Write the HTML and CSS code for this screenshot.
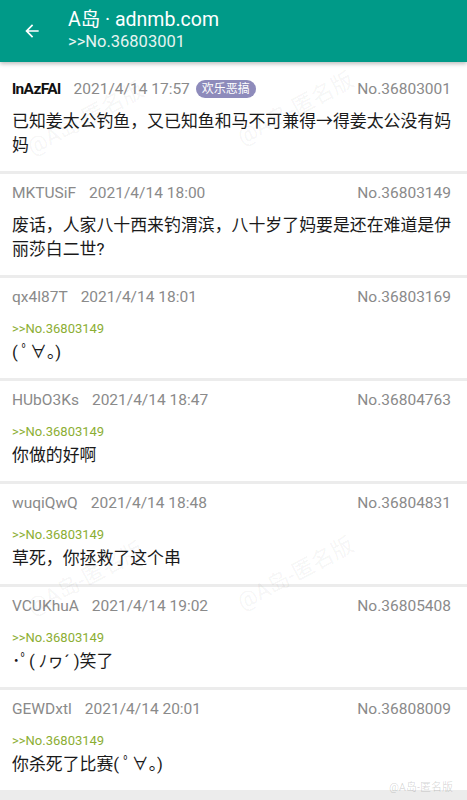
FILE: index.html
```
<!DOCTYPE html>
<html lang="zh-CN">
<head>
    <meta charset="UTF-8">
    <meta name="viewport" content="width=device-width, initial-scale=1.0">
    <title>A岛 · adnmb.com</title>
    <link rel="stylesheet" href="styles.css">
</head>
<body>
    <header class="appbar">
        <svg class="back" width="20" height="20" viewBox="0 0 24 24">
            <path d="M20 11H7.83l5.59-5.59L12 4l-8 8 8 8 1.41-1.41L7.83 13H20v-2z" fill="#fff"/>
        </svg>
        <div class="titles">
            <div class="title">A岛 · adnmb.com</div>
            <div class="subtitle">&gt;&gt;No.36803001</div>
        </div>
    </header>

    <div class="thread">
        <div class="post">
            <div class="meta">
                <span class="uid po">lnAzFAl</span>
                <span class="time">2021/4/14 17:57</span>
                <span class="tag">欢乐恶搞</span>
                <span class="no">No.36803001</span>
            </div>
            <div class="content">已知姜太公钓鱼，又已知鱼和马不可兼得→得姜太公没有妈妈</div>
        </div>

        <div class="post">
            <div class="meta">
                <span class="uid">MKTUSiF</span>
                <span class="time">2021/4/14 18:00</span>
                <span class="no">No.36803149</span>
            </div>
            <div class="content">废话，人家八十西来钓渭滨，八十岁了妈要是还在难道是伊丽莎白二世?</div>
        </div>

        <div class="post">
            <div class="meta">
                <span class="uid">qx4l87T</span>
                <span class="time">2021/4/14 18:01</span>
                <span class="no">No.36803169</span>
            </div>
            <div class="ref">&gt;&gt;No.36803149</div>
            <div class="content tight">( ﾟ∀。)</div>
        </div>

        <div class="post">
            <div class="meta">
                <span class="uid">HUbO3Ks</span>
                <span class="time">2021/4/14 18:47</span>
                <span class="no">No.36804763</span>
            </div>
            <div class="ref">&gt;&gt;No.36803149</div>
            <div class="content tight">你做的好啊</div>
        </div>

        <div class="post">
            <div class="meta">
                <span class="uid">wuqiQwQ</span>
                <span class="time">2021/4/14 18:48</span>
                <span class="no">No.36804831</span>
            </div>
            <div class="ref">&gt;&gt;No.36803149</div>
            <div class="content tight">草死，你拯救了这个串</div>
        </div>

        <div class="post">
            <div class="meta">
                <span class="uid">VCUKhuA</span>
                <span class="time">2021/4/14 19:02</span>
                <span class="no">No.36805408</span>
            </div>
            <div class="ref">&gt;&gt;No.36803149</div>
            <div class="content tight">･ﾟ( ﾉヮ´ )笑了</div>
        </div>

        <div class="post">
            <div class="meta">
                <span class="uid">GEWDxtl</span>
                <span class="time">2021/4/14 20:01</span>
                <span class="no">No.36808009</span>
            </div>
            <div class="ref">&gt;&gt;No.36803149</div>
            <div class="content tight">你杀死了比赛( ﾟ∀。)</div>
        </div>
    </div>

    <!-- faint watermarks over the screenshot -->
    <div class="mark m1">@A岛-匿名版</div>
    <div class="mark m2">@A岛-匿名版</div>
    <div class="mark m4">@A岛-匿名版</div>
    <div class="mark m5">@A岛-匿名版</div>
    <div class="weibo">@A岛-匿名版</div>
</body>
</html>
```

FILE: styles.css
```
body {
    margin: 0;
    font-family: Roboto, "Noto Sans CJK SC", sans-serif;
    background: #ececec;
    color: #222;
    overflow: hidden;
}

.appbar {
    height: 62px;
    background: #009a88;
    display: flex;
    align-items: center;
    box-shadow: 0 2px 4px rgba(0, 0, 0, 0.25);
    position: relative;
    z-index: 1;
}

.back {
    margin-left: 22px;
    margin-right: 26px;
}

.titles {
    color: #fff;
    margin-top: -4px;
}

.title {
    font-size: 19.5px;
    line-height: 25px;
}

.subtitle {
    font-size: 16.5px;
    line-height: 19px;
    color: #e6f4f1;
}

.thread {
    display: flex;
    flex-direction: column;
    gap: 3px;
    padding-top: 9px;
    background: #ececec;
}

.thread .post:first-child {
    margin-top: -9px;
    padding-top: 17px;
}

.post {
    background: #fff;
    padding: 9px 14px 14px 12px;
}

.post.reply {
    padding-top: 8px;
}

.meta {
    display: flex;
    align-items: center;
    height: 20px;
    font-size: 15.5px;
    color: #8a8a8a;
    padding-right: 2px;
}

.uid {
    margin-right: 13px;
}

.uid.po {
    color: #111;
    font-weight: bold;
    letter-spacing: -0.6px;
}

.tag {
    margin-left: 6px;
    background: #8e8bbb;
    color: #fff;
    font-size: 12px;
    line-height: 18px;
    padding: 0 6px;
    border-radius: 9px;
}

.no {
    margin-left: auto;
}

.content {
    margin-top: 10px;
    font-size: 16.9px;
    line-height: 24px;
    color: #1a1a1a;
}

.content.tight {
    margin-top: 0;
}

.ref {
    margin-top: 14px;
    margin-bottom: 3px;
    font-size: 13px;
    line-height: 16px;
    color: #8cae33;
}

.mark {
    position: absolute;
    font-size: 22px;
    color: rgba(0, 0, 0, 0.05);
    transform: rotate(-28deg);
    white-space: nowrap;
    pointer-events: none;
}

.m1 { left: 20px; top: 100px; }
.m2 { left: 230px; top: 90px; }
.m4 { left: 20px; top: 560px; }
.m5 { left: 230px; top: 555px; }

.weibo {
    position: absolute;
    right: 14px;
    top: 778px;
    font-size: 11px;
    color: rgba(0, 0, 0, 0.15);
}
```
